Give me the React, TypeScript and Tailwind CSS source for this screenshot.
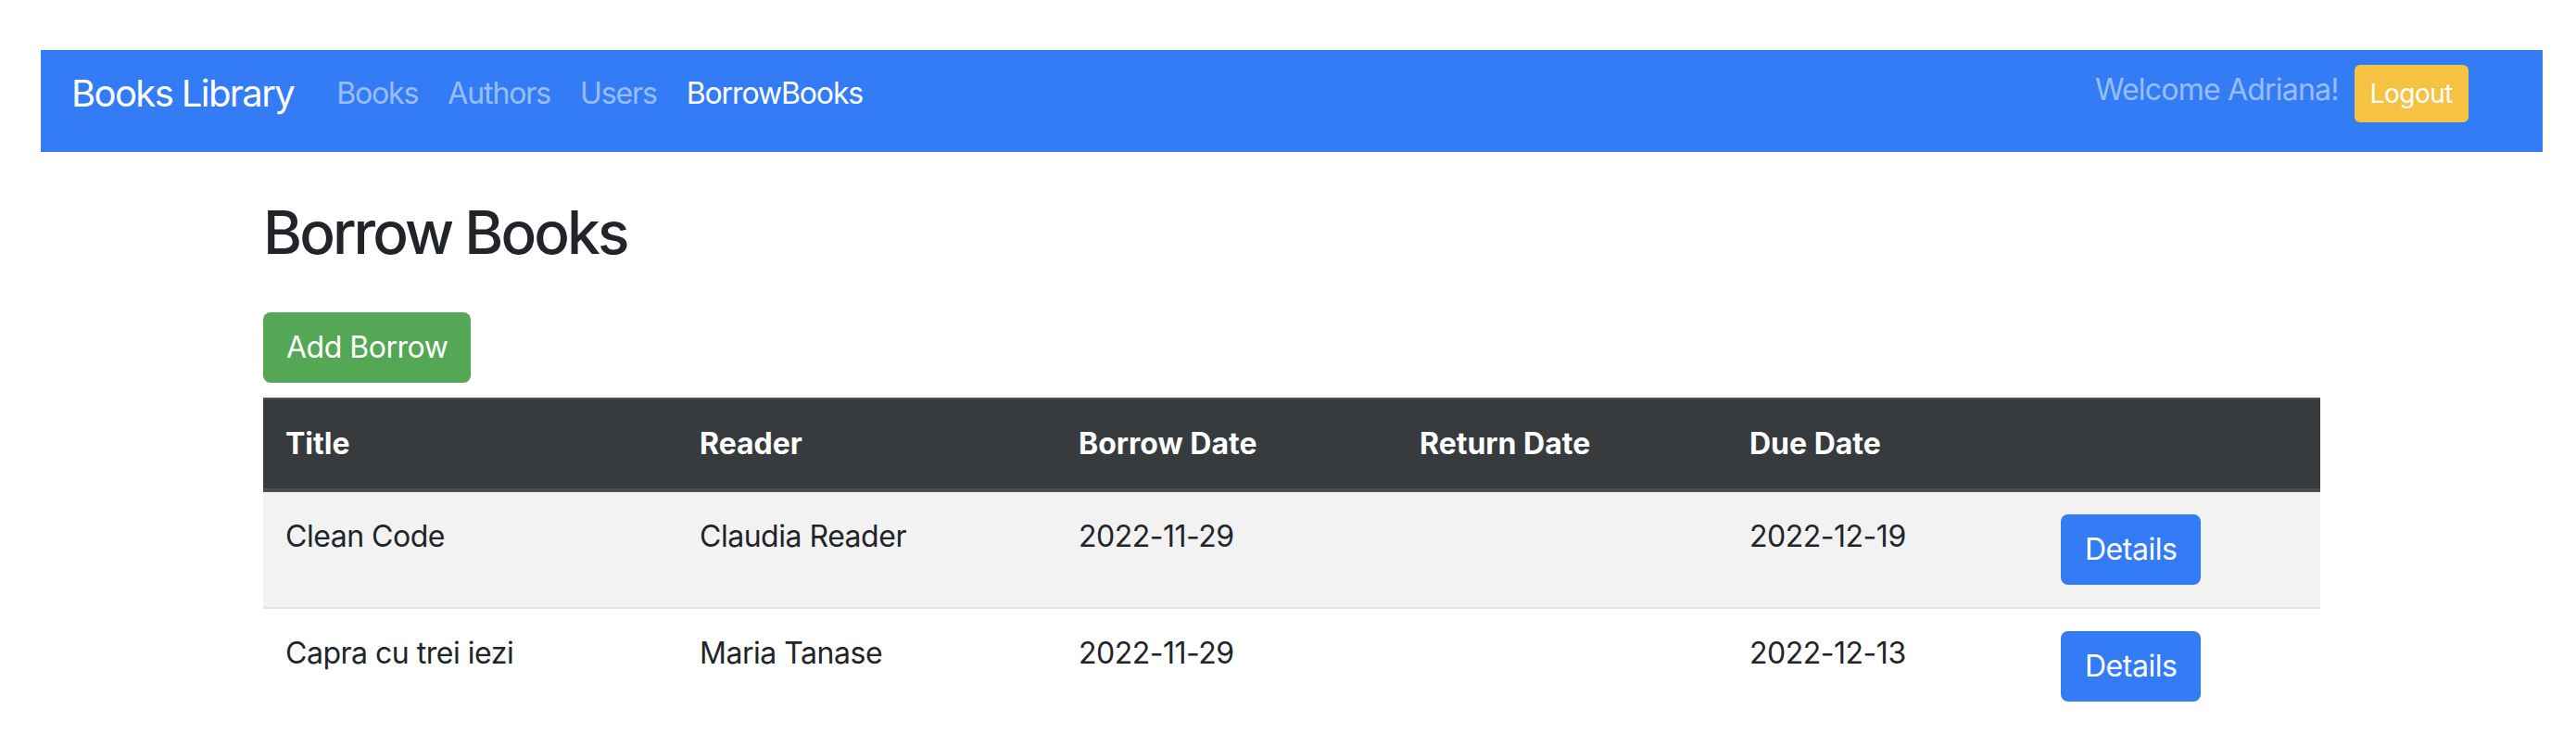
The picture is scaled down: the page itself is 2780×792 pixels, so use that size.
const borrows = [
  { title: "Clean Code", reader: "Claudia Reader", borrowDate: "2022-11-29", returnDate: "", dueDate: "2022-12-19" },
  { title: "Capra cu trei iezi", reader: "Maria Tanase", borrowDate: "2022-11-29", returnDate: "", dueDate: "2022-12-13" },
];

const columns = [
  { label: "Title", width: "w-[447px]" },
  { label: "Reader", width: "w-[409px]" },
  { label: "Borrow Date", width: "w-[368px]" },
  { label: "Return Date", width: "w-[356px]" },
  { label: "Due Date", width: "w-[336px]" },
  { label: "", width: "w-[304px]" },
];

const App = () => {
  return (
    <div className="min-h-screen bg-white pt-[54px] pl-[44px] pr-[36px] font-['Inter','Liberation_Sans',sans-serif] text-[#212529] tracking-[-0.03em]">
      {/* Navbar */}
      <nav className="h-[110px] bg-[#337cf6] flex items-center pl-[33px] pr-[80px] pb-[16px]">
        <span className="text-[40px] leading-[60px] text-white tracking-[-0.04em]">Books Library</span>
        <ul className="flex items-center ml-[30px] text-[32px] leading-[48px] tracking-[-0.035em]">
          <li className="px-[16px] text-white/50">Books</li>
          <li className="px-[16px] text-white/50">Authors</li>
          <li className="px-[16px] text-white/50">Users</li>
          <li className="px-[16px] text-white">BorrowBooks</li>
        </ul>
        <div className="ml-auto flex items-center">
          <span className="text-[32px] leading-[48px] text-white/50 mr-[17px] mb-[8px] tracking-[-0.025em]">Welcome Adriana!</span>
          <button className="h-[62px] px-[17px] rounded-[6px] bg-[#f5c242] text-white text-[28px] leading-[42px]">
            Logout
          </button>
        </div>
      </nav>

      {/* Content */}
      <main className="w-[2220px] mx-auto">
        <h2 className="text-[64px] leading-[1.2] font-medium mt-[49px] mb-[47px] tracking-[-0.045em]">Borrow Books</h2>

        <button className="h-[76px] px-[25px] rounded-[8px] bg-[#54a754] text-white text-[32px] leading-[48px] mb-[16px]">
          Add Borrow
        </button>

        <table className="w-full table-fixed border-collapse text-[32px] leading-[48px]">
          <thead>
            <tr className="bg-[#373b3e] text-white">
              {columns.map((col, i) => (
                <th
                  key={i}
                  className={`${col.width} p-[24px] text-left font-bold tracking-normal border-t-[2px] border-b-[4px] border-[#4a4f55]`}
                >
                  {col.label}
                </th>
              ))}
            </tr>
          </thead>
          <tbody>
            {borrows.map((b, i) => (
              <tr key={i} className={i % 2 === 0 ? "bg-[#f2f2f2]" : "bg-white"}>
                <td className="p-[24px] align-top border-t-[2px] border-[#e2e4e7]">{b.title}</td>
                <td className="p-[24px] align-top border-t-[2px] border-[#e2e4e7]">{b.reader}</td>
                <td className="p-[24px] align-top border-t-[2px] border-[#e2e4e7]">{b.borrowDate}</td>
                <td className="p-[24px] align-top border-t-[2px] border-[#e2e4e7]">{b.returnDate}</td>
                <td className="p-[24px] align-top border-t-[2px] border-[#e2e4e7]">{b.dueDate}</td>
                <td className="p-[24px] align-top border-t-[2px] border-[#e2e4e7]">
                  <button className="h-[76px] px-[26px] rounded-[8px] bg-[#337cf6] text-white text-[32px] leading-[48px]">
                    Details
                  </button>
                </td>
              </tr>
            ))}
          </tbody>
        </table>
      </main>
    </div>
  );
};

export default App;
